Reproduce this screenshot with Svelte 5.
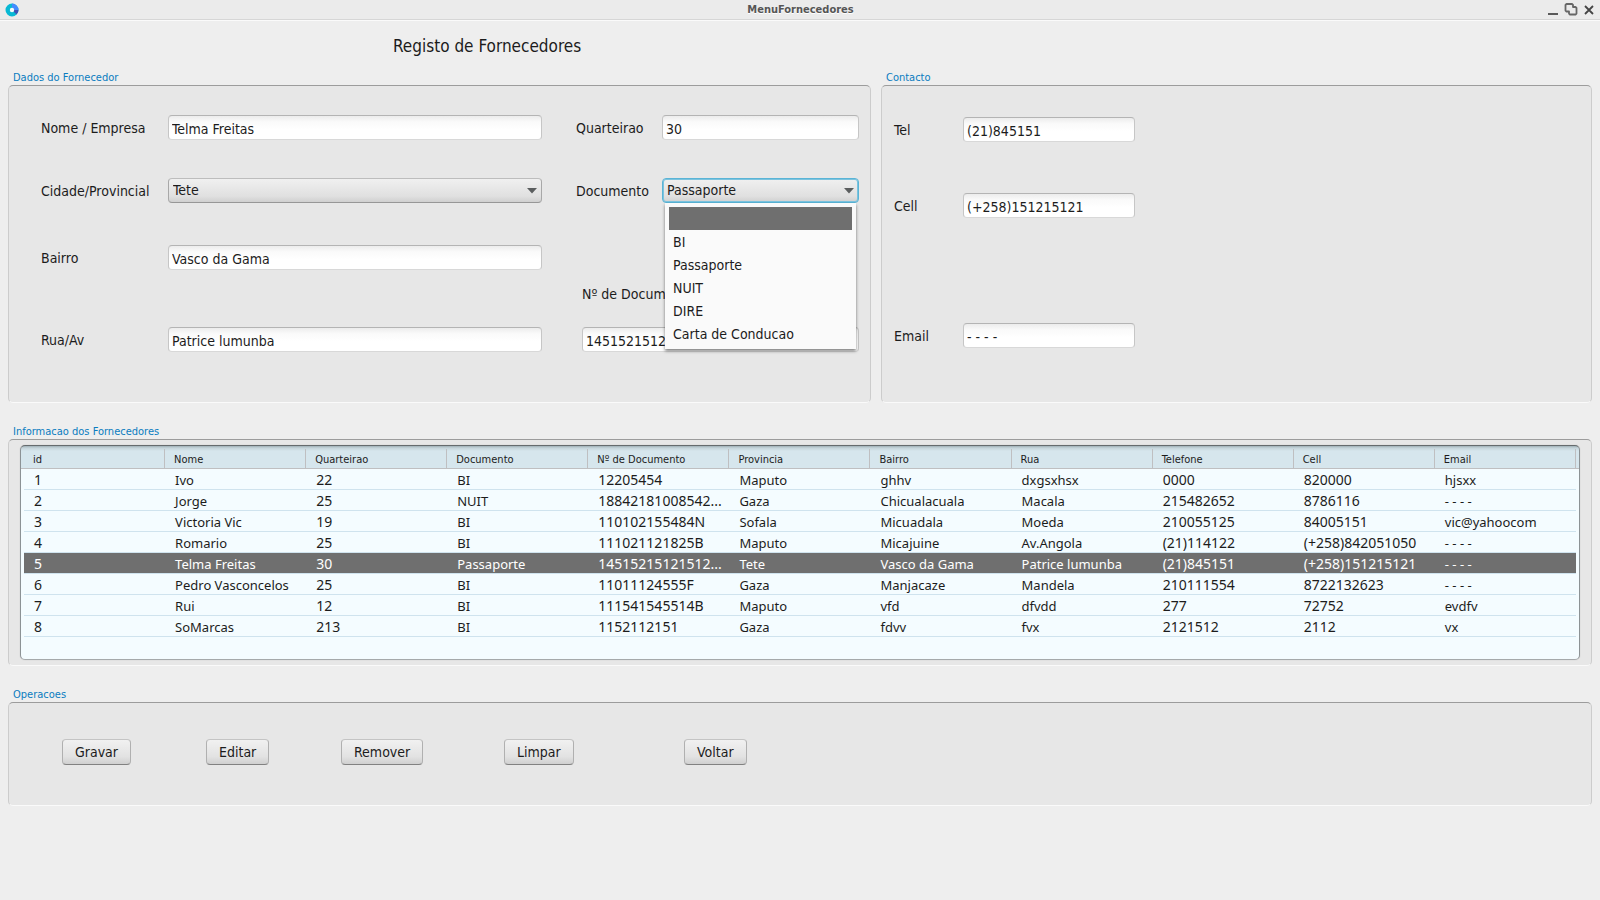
<script>
  const columns = [
    { label: 'id', numeric: true },
    { label: 'Nome' },
    { label: 'Quarteirao', numeric: true },
    { label: 'Documento' },
    { label: 'Nº de Documento', numeric: true },
    { label: 'Provincia' },
    { label: 'Bairro' },
    { label: 'Rua' },
    { label: 'Telefone', numeric: true },
    { label: 'Cell', numeric: true },
    { label: 'Email' }
  ];

  const rows = [
    ['1', 'Ivo', '22', 'BI', '12205454', 'Maputo', 'ghhv', 'dxgsxhsx', '0000', '820000', 'hjsxx'],
    ['2', 'Jorge', '25', 'NUIT', '18842181008542...', 'Gaza', 'Chicualacuala', 'Macala', '215482652', '8786116', '- - - -'],
    ['3', 'Victoria Vic', '19', 'BI', '110102155484N', 'Sofala', 'Micuadala', 'Moeda', '210055125', '84005151', 'vic@yahoocom'],
    ['4', 'Romario', '25', 'BI', '111021121825B', 'Maputo', 'Micajuine', 'Av.Angola', '(21)114122', '(+258)842051050', '- - - -'],
    ['5', 'Telma Freitas', '30', 'Passaporte', '14515215121512...', 'Tete', 'Vasco da Gama', 'Patrice lumunba', '(21)845151', '(+258)151215121', '- - - -'],
    ['6', 'Pedro Vasconcelos', '25', 'BI', '11011124555F', 'Gaza', 'Manjacaze', 'Mandela', '210111554', '8722132623', '- - - -'],
    ['7', 'Rui', '12', 'BI', '111541545514B', 'Maputo', 'vfd', 'dfvdd', '277', '72752', 'evdfv'],
    ['8', 'SoMarcas', '213', 'BI', '1152112151', 'Gaza', 'fdvv', 'fvx', '2121512', '2112', 'vx']
  ];

  const documents = ['', 'BI', 'Passaporte', 'NUIT', 'DIRE', 'Carta de Conducao'];

  let selectedId = $state('5');
  let highlighted = $state(0);
  let documentType = $state('Passaporte');
  let province = $state('Tete');
</script>

<div class="window">
  <header class="titlebar">
    <svg class="app-icon" viewBox="0 0 14 14" aria-hidden="true">
      <circle cx="7" cy="7" r="4" fill="none" stroke="#07b8d4" stroke-width="5" />
      <path d="M7 .5A6.5 6.5 0 0 1 13.5 7H9.2A2.2 2.2 0 0 0 7 4.8Z" fill="#448aff" />
      <path d="M13.5 7A6.5 6.5 0 0 1 11.6 11.6L8.5 8.6A2.2 2.2 0 0 0 9.2 7Z" fill="#3f51b5" />
      <circle cx="7" cy="7" r="2.2" fill="#f4fafb" />
    </svg>
    <span class="window-title">MenuFornecedores</span>
    <div class="window-buttons">
      <button type="button" aria-label="Minimizar">
        <svg viewBox="0 0 14 14"><path d="M2 11H12" stroke="#5a5a5a" stroke-width="2" fill="none" /></svg>
      </button>
      <button type="button" aria-label="Restaurar">
        <svg viewBox="0 0 14 14"><path d="M2.500 1H8L9 2V4H11.500L12.500 5V10.500L11.500 11.500H6L5 10.500V8.500H2.500L1.500 7.500V2Z" stroke="#666" stroke-width="1.800" stroke-linejoin="round" fill="none" /></svg>
      </button>
      <button type="button" aria-label="Fechar">
        <svg viewBox="0 0 14 14"><path d="M3 3L11 11M11 3L3 11" stroke="#444" stroke-width="1.800" fill="none" /></svg>
      </button>
    </div>
  </header>

  <main>
    <h1>Registo de Fornecedores</h1>

    <div class="top">
      <section>
        <h2>Dados do Fornecedor</h2>
        <div class="panel supplier">
          <div class="fields address">
            <label for="nome">Nome / Empresa</label>
            <input id="nome" type="text" value="Telma Freitas" />
            <label for="cidade">Cidade/Provincial</label>
            <div class="combo">
              <select id="cidade" bind:value={province}>
                <option>Tete</option>
                <option>Maputo</option>
                <option>Gaza</option>
                <option>Sofala</option>
              </select>
              <svg viewBox="0 0 10 6" aria-hidden="true"><path d="M0 0H10L5 5.5Z" fill="#5b5e5f" /></svg>
            </div>
            <label for="bairro">Bairro</label>
            <input id="bairro" type="text" value="Vasco da Gama" />
            <label for="rua">Rua/Av</label>
            <input id="rua" type="text" value="Patrice lumunba" />
          </div>

          <div class="fields identity">
            <label for="quarteirao">Quarteirao</label>
            <input id="quarteirao" type="text" value="30" />
            <label for="documento">Documento</label>
            <div class="combo open">
              <select id="documento" bind:value={documentType}>
                {#each documents as doc}
                  <option>{doc}</option>
                {/each}
              </select>
              <svg viewBox="0 0 10 6" aria-hidden="true"><path d="M0 0H10L5 5.5Z" fill="#5b5e5f" /></svg>
              <ul class="popup" role="listbox" aria-label="Documento">
                {#each documents as doc, i}
                  <li role="option" aria-selected={i === highlighted} class:active={i === highlighted} onmouseenter={() => (highlighted = i)}>{doc}</li>
                {/each}
              </ul>
            </div>
            <label class="wide" for="numero">Nº de Documento</label>
            <div class="wide">
              <input id="numero" type="text" value="14515215121512" />
            </div>
          </div>
        </div>
      </section>

      <section>
        <h2>Contacto</h2>
        <div class="panel contact">
          <div class="fields reach">
            <label for="tel">Tel</label>
            <input id="tel" type="text" value="(21)845151" />
            <label for="cell">Cell</label>
            <input id="cell" type="text" value="(+258)151215121" />
            <label for="email">Email</label>
            <input id="email" type="text" value="- - - -" />
          </div>
        </div>
      </section>
    </div>

    <section class="info">
      <h2>Informacao dos Fornecedores</h2>
      <div class="panel listing">
        <div class="table-box">
          <table>
            <thead>
              <tr>
                {#each columns as column}
                  <th scope="col">{column.label}</th>
                {/each}
              </tr>
            </thead>
            <tbody>
              {#each rows as row}
                <tr class:selected={row[0] === selectedId} onclick={() => (selectedId = row[0])}>
                  {#each row as cell, i}
                    <td class:numeric={columns[i].numeric}>{cell}</td>
                  {/each}
                </tr>
              {/each}
            </tbody>
          </table>
        </div>
      </div>
    </section>

    <section class="operations">
      <h2>Operacoes</h2>
      <div class="panel actions">
        <button type="button">Gravar</button>
        <button type="button">Editar</button>
        <button type="button">Remover</button>
        <button type="button">Limpar</button>
        <button type="button">Voltar</button>
      </div>
    </section>
  </main>
</div>

<style>
  :global(body) {
    background: #eee;
  }

  .window {
    min-height: 100vh;
    background: #eee;
    color: #1c1c1c;
    font: 14px/27px Tahoma, "DejaVu Sans Condensed", "DejaVu Sans", sans-serif;
  }

  .window,
  .window * {
    box-sizing: border-box;
  }

  .titlebar {
    display: grid;
    grid-template-columns: 1fr auto 1fr;
    align-items: center;
    height: 21px;
    padding: 0 4px 0 5px;
    background: #ebebeb;
    border-bottom: 1px solid #fafafa;
    box-shadow: inset 0 -1px #d6d6d6;
  }

  .app-icon {
    width: 14px;
    height: 14px;
  }

  .window-title {
    color: #555;
    font-size: 11px;
    font-weight: bold;
    line-height: 20px;
    text-shadow: 0 1px #fff;
  }

  .window-buttons {
    display: flex;
    justify-content: flex-end;
    gap: 4px;
  }

  .window-buttons button {
    display: flex;
    width: 14px;
    height: 14px;
    padding: 0;
    border: 0;
    background: none;
  }

  .window-buttons svg {
    width: 14px;
    height: 14px;
  }

  main {
    padding: 12px 8px;
  }

  h1 {
    margin: 0 0 9px 385px;
    font-size: 17px;
    font-weight: normal;
    line-height: 26px;
  }

  h2 {
    margin: 0;
    padding: 2px 0 0 5px;
    color: #0a7cc0;
    font-size: 11px;
    font-weight: normal;
    line-height: 15px;
  }

  .top {
    display: grid;
    grid-template-columns: 863fr 711fr;
    gap: 10px;
  }

  .panel {
    border: 1px solid #ccc;
    border-top-color: #9c9c9c;
    border-bottom-color: #fafafa;
    border-radius: 5px;
    background: #e7e7e7;
  }

  .supplier {
    display: grid;
    grid-template-columns: 501fr 283fr;
    gap: 34px;
    height: 318px;
    padding: 29px 11px 0 32px;
  }

  .fields {
    display: grid;
    align-items: start;
    align-content: start;
  }

  .address {
    grid-template-columns: 127px 1fr;
    grid-template-rows: 63px 67px 82px 25px;
  }

  .identity {
    grid-template-columns: 86px 1fr;
    grid-template-rows: 63px 103px 46px 25px;
  }

  .wide {
    grid-column: 1 / -1;
    padding-left: 6px;
  }

  .contact {
    height: 318px;
    padding: 31px 12px 0;
  }

  .reach {
    grid-template-columns: 69px 172px;
    grid-template-rows: 76px 130px 25px;
  }

  label {
    white-space: nowrap;
  }

  input,
  select {
    display: block;
    width: 100%;
    height: 25px;
    margin: 0;
    border: 1px solid #c6c6c6;
    border-radius: 4px;
    color: #1c1c1c;
    font: inherit;
    outline: 0;
  }

  input {
    padding: 2px 3px 0;
    border-top-color: #b4b4b4;
    border-bottom-color: #d8d8d8;
    background: linear-gradient(#ececec, #fafafa 25%, #fff 60%);
    line-height: 20px;
  }

  .combo {
    position: relative;
  }

  select {
    appearance: none;
    padding: 0 20px 0 4px;
    border-color: #bdbdbd #a8a8a8 #979797;
    background: linear-gradient(#f0f0f0, #e0e0e0 75%, #d0d0d0);
    line-height: 23px;
  }

  .open select {
    border-color: #5ab4d6;
    box-shadow: inset 0 0 0 1px #7cc3de;
  }

  .combo svg {
    position: absolute;
    top: 10px;
    right: 5px;
    width: 10px;
    height: 6px;
    pointer-events: none;
  }

  .popup {
    position: absolute;
    z-index: 1;
    top: 25px;
    right: 3px;
    left: 3px;
    margin: 0;
    padding: 4px;
    background: #fafafa;
    box-shadow: 0 2px 3px rgb(0 0 0 / 50%);
    list-style: none;
    line-height: 25px;
  }

  .popup li {
    height: 23px;
    padding-left: 4px;
  }

  .popup .active {
    background: #6f6f6f;
    color: #fff;
  }

  .info {
    margin-top: 19px;
  }

  .listing {
    height: 227px;
    padding: 5px 11px;
  }

  .table-box {
    height: 100%;
    overflow: hidden;
    padding: 0 3px;
    border: 1px solid #8c9295;
    border-top-color: #666b6d;
    border-bottom-color: #a5a9ab;
    border-radius: 5px;
    background: linear-gradient(#9fb0b7, #c5d4da 2px, #d6e6ed 5px, #d6e6ed 22px, #bfbfc1 22px, #bfbfc1 23px, #f4fcff 23px);
    box-shadow: 0 0 1px #aaa;
  }

  table {
    width: 100%;
    table-layout: fixed;
    border-collapse: separate;
    border-spacing: 0;
  }

  th {
    height: 23px;
    padding: 5px 0 0 9px;
    background: linear-gradient(#bfbfc1, #bfbfc1) right 3px / 1px 20px no-repeat;
    font-size: 11px;
    font-weight: normal;
    line-height: 18px;
    text-align: left;
  }

  td {
    height: 21px;
    padding: 2px 0 0 10px;
    overflow: hidden;
    border-bottom: 1px solid #cfe3ee;
    font-family: "Segoe UI", "Noto Sans", sans-serif;
    font-size: 13px;
    line-height: 18px;
    white-space: nowrap;
  }

  .numeric {
    font-size: 14px;
  }

  .selected td {
    background: #6f6f6f;
    background-clip: padding-box;
    color: #fff;
  }

  .operations {
    margin-top: 19px;
  }

  .actions {
    display: grid;
    grid-template-columns: 144px 135px 163px 180px auto;
    align-items: start;
    justify-items: start;
    justify-content: start;
    height: 104px;
    padding: 36px 53px 0;
  }

  .actions button {
    height: 26px;
    padding: 0 12px;
    border: 1px solid #b0b0b0;
    border-top-color: #c4c4c4;
    border-bottom-color: #818181;
    border-radius: 4px;
    background: linear-gradient(#f1f1f1, #e2e2e2 70%, #d0d0d0);
    color: #1c1c1c;
    font: inherit;
    line-height: 23px;
  }
</style>
